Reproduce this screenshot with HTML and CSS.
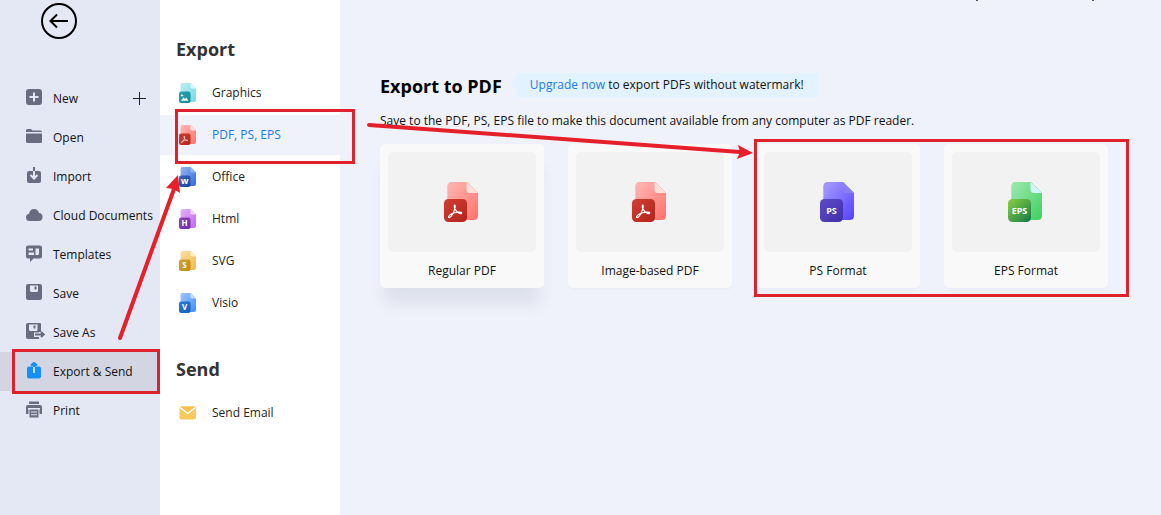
FILE: index.html
```html
<!DOCTYPE html>
<html lang="en">
<head>
    <meta charset="UTF-8">
    <title>Export to PDF</title>
    <link rel="stylesheet" href="styles.css">
</head>
<body>

<!-- shared icon shapes -->
<svg class="defs" aria-hidden="true">
    <defs>
        <linearGradient id="pageLight" x1="0" y1="0" x2="1" y2="1">
            <stop offset="0.1" stop-color="#fff" stop-opacity="0.45"/>
            <stop offset="1" stop-color="#fff" stop-opacity="0"/>
        </linearGradient>
        <linearGradient id="badgeShade" x1="0" y1="0" x2="1" y2="1">
            <stop offset="0" stop-color="#fff" stop-opacity="0.1"/>
            <stop offset="1" stop-color="#000" stop-opacity="0.12"/>
        </linearGradient>
        <linearGradient id="epsBadge" x1="0" y1="0" x2="1" y2="1">
            <stop offset="0" stop-color="#7ccb2c"/>
            <stop offset="1" stop-color="#158a50"/>
        </linearGradient>
    </defs>
    <symbol id="file" viewBox="0 0 34 40">
        <path class="page" d="M8 0H23L34 11V33.500Q34 38 29.500 38H8Q3.500 38 3.500 33.500V4.500Q3.500 0 8 0Z"/>
        <path fill="url(#pageLight)" d="M8 0H23L34 11V33.500Q34 38 29.500 38H8Q3.500 38 3.500 33.500V4.500Q3.500 0 8 0Z"/>
        <path class="fold" d="M22.500 0L34 11H26Q22.500 11 22.500 7.500Z"/>
        <rect class="badge" y="17" width="23" height="23" rx="4.500"/>
        <rect fill="url(#badgeShade)" y="17" width="23" height="23" rx="4.500"/>
    </symbol>
    <symbol id="acrobat" viewBox="0 0 34 40">
        <path fill="none" stroke="#fff" stroke-width="1.200" stroke-linecap="round" stroke-linejoin="round" d="M10.500 23C9.700 24.500 10.800 27 12.500 29.200C14 30.800 16.500 32 17.500 31.400C18.200 30.500 16.800 30 14.800 30.100C12 30.200 9 31 7 32.200C5.200 33.400 4 35 4.800 35.500C6 36 8.300 32.700 9.500 30.200C11 27 12 23 10.500 23Z"/>
    </symbol>
</svg>

<div class="app">
    <aside class="sidebar">
        <button class="back" type="button" aria-label="Back">
            <svg width="36" height="36" viewBox="0 0 36 36" fill="none" stroke="#000" stroke-width="2">
                <circle cx="18" cy="18" r="17"/>
                <path d="M27 18H10M16 11.500L9.500 18L16 24.500"/>
            </svg>
        </button>

        <nav class="menu">
            <div class="menu-row">
                <a href="#" class="menu-item">
                    <svg viewBox="0 0 20 20"><rect x="1" y="0" width="16" height="16" rx="3"/><path class="cut" d="M9 3.500V12.500M4.500 8H13.500"/></svg>
                    New
                </a>
                <button class="add" type="button" aria-label="Add new">
                    <svg width="13" height="13" viewBox="0 0 13 13" stroke="#222"><path d="M6.500 0V13M0 6.500H13"/></svg>
                </button>
            </div>
            <a href="#" class="menu-item">
                <svg viewBox="0 0 20 20"><path d="M1 4V2.500Q1 1 2.500 1H6L7.500 2.500H15.500Q17 2.500 17 4ZM1 5.500H17V13.500Q17 15 15.500 15H2.500Q1 15 1 13.500Z"/></svg>
                Open
            </a>
            <a href="#" class="menu-item">
                <svg viewBox="0 0 20 20"><rect x="2" y="4" width="14" height="12" rx="2"/><path class="cut" d="M9 4V11M5.500 8L9 11.500L12.500 8"/><path class="line" d="M9 0V4"/></svg>
                Import
            </a>
            <a href="#" class="menu-item">
                <svg viewBox="0 0 20 20"><path d="M4.500 15Q1 15 1 11.500Q1 8.500 4 7.800Q4.800 3 9 3Q13 3 14 7Q17.500 7.300 17.500 11Q17.500 15 13.500 15Z"/></svg>
                Cloud Documents
            </a>
            <a href="#" class="menu-item">
                <svg viewBox="0 0 20 20"><path d="M3 0.500H15Q17 0.500 17 2.500V11.500Q17 13.500 15 13.500H8.500L5 17V13.500H3Q1 13.500 1 11.500V2.500Q1 0.500 3 0.500Z"/><path class="hole" d="M3.500 3.500H8V5.500H3.500ZM3.500 7.500H9V10H3.500ZM10.500 3.500H14V9L13 10H10.500Z"/></svg>
                Templates
            </a>
            <a href="#" class="menu-item">
                <svg viewBox="0 0 20 20"><rect x="1" y="0" width="16" height="16" rx="2"/><path class="hole" d="M5 1.500H13V6.500Q13 8 11.500 8H6.500Q5 8 5 6.500Z"/><path class="line" d="M10.500 2.500V5.500"/></svg>
                Save
            </a>
            <a href="#" class="menu-item">
                <svg viewBox="0 0 20 20"><path d="M3 0H15Q16 0 16 1V9H14V16H3Q1 16 1 14V2Q1 0 3 0Z"/><path class="hole" d="M4 1.500H12.500V6.500Q12.500 8 11 8H5.500Q4 8 4 6.500Z"/><path class="line" d="M9.500 2.500V5.500"/><path class="hole" d="M9 9.500H16V14H9Z"/><path class="line" d="M10 11.500H18M16 9L18.800 11.500L16 14"/></svg>
                Save As
            </a>
            <a href="#" class="menu-item active">
                <svg viewBox="0 0 20 20"><path d="M4 4.500H14Q16 4.500 16 6.500V14.500Q16 16.500 14 16.500H4Q2 16.500 2 14.500V6.500Q2 4.500 4 4.500Z"/><path class="line" d="M9 5V1M6 3.500L9 0.800L12 3.500"/><path stroke="#fff" stroke-width="1.500" d="M9 5V11"/></svg>
                Export &amp; Send
            </a>
            <a href="#" class="menu-item">
                <svg viewBox="0 0 20 20"><path d="M4 0.500H14V3H4ZM3 4H15Q17 4 17 6V13H1V6Q1 4 3 4Z"/><path class="hole" d="M3 7H15V8.500H14.500V15H3.500V8.500H3Z"/><path d="M4.500 8.500H13.500V16.500H4.500Z"/><path class="hole" d="M6 10.500H12V11.500H6ZM6 13.200H12V14.200H6Z"/></svg>
                Print
            </a>
        </nav>
    </aside>

    <section class="panel">
        <h2>Export</h2>
        <nav class="formats">
            <a href="#" class="format graphics">
                <svg viewBox="0 0 34 40"><use href="#file"/><path fill="#fff" d="M4 35.500L9 29L12 32L15 29L19 35.500ZM6 21.500L7 24L9.500 25L7 26L6 28.500L5 26L2.500 25L5 24Z"/></svg>
                Graphics
            </a>
            <a href="#" class="format pdf selected">
                <svg viewBox="0 0 34 40"><use href="#file"/><use href="#acrobat"/></svg>
                PDF, PS, EPS
            </a>
            <a href="#" class="format office">
                <svg viewBox="0 0 34 40"><use href="#file"/><text x="11" y="34" font-size="18">w</text></svg>
                Office
            </a>
            <a href="#" class="format html">
                <svg viewBox="0 0 34 40"><use href="#file"/><text x="11" y="34" font-size="16">H</text></svg>
                Html
            </a>
            <a href="#" class="format vector">
                <svg viewBox="0 0 34 40"><use href="#file"/><text x="11" y="34" font-size="16">S</text></svg>
                SVG
            </a>
            <a href="#" class="format visio">
                <svg viewBox="0 0 34 40"><use href="#file"/><text x="11" y="34" font-size="16">V</text></svg>
                Visio
            </a>
        </nav>

        <h2>Send</h2>
        <nav class="formats">
            <a href="#" class="format">
                <svg viewBox="0 0 34 40"><rect x="1" y="7" width="33" height="26" rx="4" fill="#f8c95c"/><path fill="#f6bf49" d="M3 7H32L34 10L17.500 21L1 10Z"/><path d="M2 9L17.500 20.500L33 9" fill="none" stroke="#fff" stroke-width="3"/></svg>
                Send Email
            </a>
        </nav>
    </section>

    <main class="content">
        <span class="mark mark-left"></span>
        <span class="mark mark-right"></span>

        <header class="title">
            <h1>Export to PDF</h1>
            <p class="upgrade"><a href="#">Upgrade now</a> to export PDFs without watermark!</p>
        </header>
        <p class="intro">Save to the PDF, PS, EPS file to make this document available from any computer as PDF reader.</p>

        <div class="cards">
            <button class="card pdf raised" type="button">
                <span class="preview"><svg viewBox="0 0 34 40"><use href="#file"/><use href="#acrobat"/></svg></span>
                <span class="name">Regular PDF</span>
            </button>
            <button class="card pdf" type="button">
                <span class="preview"><svg viewBox="0 0 34 40"><use href="#file"/><use href="#acrobat"/></svg></span>
                <span class="name">Image-based PDF</span>
            </button>
            <button class="card ps" type="button">
                <span class="preview"><svg viewBox="0 0 34 40"><use href="#file"/><text x="11.500" y="32" font-size="9">PS</text></svg></span>
                <span class="name">PS Format</span>
            </button>
            <button class="card eps" type="button">
                <span class="preview"><svg viewBox="0 0 34 40"><use href="#file"/><text x="11.500" y="32" font-size="9">EPS</text></svg></span>
                <span class="name">EPS Format</span>
            </button>
        </div>
    </main>
</div>

<!-- red guide boxes and arrows -->
<svg class="guides" width="1161" height="515" viewBox="0 0 1161 515" aria-hidden="true">
    <g fill="none" stroke="#df212b" stroke-width="3">
        <rect x="13.500" y="350.500" width="145" height="42"/>
        <rect x="176.500" y="110.500" width="177" height="52"/>
        <rect x="755.500" y="140.500" width="372" height="155"/>
    </g>
    <g stroke="#e5202b" stroke-width="4" stroke-linecap="round">
        <path d="M120 338L174 189"/>
        <path d="M369 125L740 152"/>
    </g>
    <g fill="#e5202b">
        <path d="M178 175L180 193L173.500 189L166 188Z"/>
        <path d="M753 153L737 159L740 152L738 145Z"/>
    </g>
</svg>

</body>
</html>
```
FILE: styles.css
```css
* {
    box-sizing: border-box;
}

body {
    margin: 0;
    font-family: "Open Sans", "Noto Sans", sans-serif;
    font-size: 12px;
    line-height: 18px;
    color: #111;
    background: #eff2fb;
}

a {
    color: inherit;
    text-decoration: none;
}

button {
    padding: 0;
    border: 0;
    background: none;
    font: inherit;
    color: inherit;
    cursor: pointer;
}

h1,
h2,
p {
    margin: 0;
}

svg {
    display: block;
    flex: none;
}

.defs {
    position: absolute;
    width: 0;
    height: 0;
}

.app {
    display: flex;
    min-height: 100vh;
}

/* left menu */
.sidebar {
    width: 160px;
    flex: none;
    padding-top: 3px;
    background: #e4e7f4;
}

.back {
    display: block;
    margin-left: 41px;
}

.menu {
    margin-top: 40px;
}

.menu-row {
    display: flex;
    align-items: center;
    justify-content: space-between;
    padding-right: 14px;
}

.menu-item {
    display: flex;
    align-items: center;
    gap: 8px;
    height: 39px;
    padding-left: 25px;
    white-space: nowrap;
    --icon: #686c7e;
    --back: #e4e7f4;
}

.menu-item svg {
    width: 20px;
    height: 20px;
    fill: var(--icon);
}

.menu-item .cut {
    fill: none;
    stroke: var(--back);
    stroke-width: 2;
}

.menu-item .line {
    fill: none;
    stroke: var(--icon);
    stroke-width: 2;
}

.menu-item .hole {
    fill: var(--back);
}

.menu-item.active {
    background: #d3d6e2;
    --icon: #1590fa;
}

/* format list */
.panel {
    width: 180px;
    flex: none;
    padding-top: 37px;
    background: #fff;
}

.panel h2 {
    padding-left: 16px;
    font-size: 18px;
    line-height: 24px;
    color: #333;
}

.formats {
    display: flex;
    flex-direction: column;
    gap: 2px;
    margin: 12px 0 34px;
}

.format {
    display: flex;
    align-items: center;
    gap: 16px;
    height: 40px;
    padding-left: 19px;
    color: #222;
}

.format svg {
    width: 17px;
    height: 20px;
}

.format.selected {
    background: #eff2fa;
    color: #1a7be0;
}

/* file icon colours */
.page {
    fill: var(--page);
}

.fold {
    fill: var(--fold);
}

.badge {
    fill: var(--badge);
}

svg text {
    fill: #fff;
    font-weight: bold;
    text-anchor: middle;
}

.graphics {
    --page: #75dce9;
    --fold: #d5f7fa;
    --badge: #139ba8;
}

.pdf {
    --page: #ff716b;
    --fold: #ffe0db;
    --badge: #c9281e;
}

.office {
    --page: #2f6be0;
    --fold: #8fb4f8;
    --badge: #1d52b8;
}

.html {
    --page: #c565f8;
    --fold: #f0d2fd;
    --badge: #8130b3;
}

.vector {
    --page: #f5bb4a;
    --fold: #fdebc5;
    --badge: #d29a18;
}

.visio {
    --page: #3f8df8;
    --fold: #c2dcff;
    --badge: #1769d2;
}

.ps {
    --page: #5440ff;
    --fold: #8a7ff2;
    --badge: #4a35c0;
}

.eps {
    --page: #3fd160;
    --fold: #d5f3fc;
    --badge: url(#epsBadge);
}

/* main area */
.content {
    position: relative;
    flex: 1;
    min-width: 0;
    padding: 73px 40px 0;
}

.mark {
    position: absolute;
    top: 0;
    width: 2px;
    height: 1px;
    background: #555;
}

.mark-left {
    right: 183px;
}

.mark-right {
    right: 67px;
}

.title {
    display: flex;
    align-items: flex-start;
    gap: 14px;
}

.title h1 {
    font-size: 18px;
    line-height: 26px;
    color: #000;
    white-space: nowrap;
}

.upgrade {
    position: relative;
    padding: 3px 14px;
    border-radius: 3px;
    background: #e3f2ff;
    white-space: nowrap;
}

.upgrade::before {
    content: "";
    position: absolute;
    top: 6px;
    right: 100%;
    border: 6px solid transparent;
    border-right-color: #e3f2ff;
    border-left: 0;
}

.upgrade a {
    color: #1a7be0;
}

.intro {
    margin-top: 13px;
}

.cards {
    display: flex;
    flex-wrap: wrap;
    gap: 24px;
    margin-top: 14px;
}

.card {
    width: 164px;
    padding: 8px;
    border-radius: 5px;
    background: #f9f9fa;
    box-shadow: 0 2px 2px rgba(40, 50, 80, 0.02);
}

.card.raised {
    box-shadow: 0 20px 16px -4px rgba(40, 50, 80, 0.09);
}

.preview {
    display: flex;
    align-items: center;
    justify-content: center;
    height: 100px;
    padding-right: 2px;
    border-radius: 5px;
    background: #f2f2f3;
}

.preview svg {
    width: 34px;
    height: 40px;
}

.name {
    display: block;
    padding: 10px 0 0;
}

/* guide overlay */
.guides {
    position: absolute;
    top: 0;
    left: 0;
    pointer-events: none;
}
```
